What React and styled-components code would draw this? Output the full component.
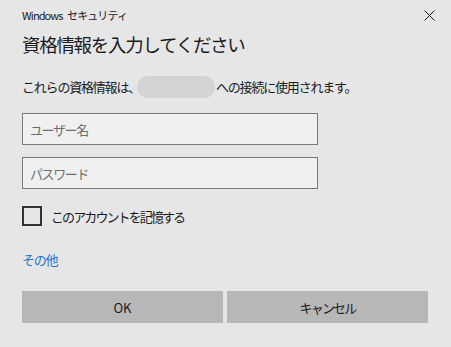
import React, { useState } from "react";
import styled, { createGlobalStyle } from "styled-components";

const GlobalStyle = createGlobalStyle`
  html, body {
    margin: 0;
    padding: 0;
    background: #e6e6e6;
  }
  body {
    font-family: "Noto Sans CJK JP", "Noto Sans", sans-serif;
    color: #1a1a1a;
  }
`;

const Dialog = styled.div`
  width: 451px;
  height: 347px;
  box-sizing: border-box;
  background: #e6e6e6;
  padding: 0 23px 0 22px;
  display: flex;
  flex-direction: column;
`;

const TitleBar = styled.div`
  display: flex;
  align-items: center;
  justify-content: space-between;
  height: 30px;
  font-size: 11px;
  letter-spacing: -0.9px;
  word-spacing: 3px;
  color: #1a1a1a;
`;

const CloseBtn = styled.button`
  background: none;
  border: none;
  padding: 0;
  margin-right: -8px;
  width: 14px;
  height: 14px;
  display: flex;
  align-items: center;
  justify-content: center;
  cursor: pointer;
`;

const Heading = styled.h1`
  margin: 0;
  font-size: 18.5px;
  font-weight: 400;
  line-height: 28px;
  letter-spacing: -1.3px;
  color: #1a1a1a;
`;

const Message = styled.p`
  margin: 18px 0 0;
  font-size: 13px;
  line-height: 22px;
  letter-spacing: -1.2px;
  display: flex;
  align-items: center;
`;

const Hidden = styled.span`
  display: inline-block;
  width: 78px;
  height: 22px;
  border-radius: 11px;
  background: #d2d3d5;
  margin: 0 1px 0 -3px;
`;

const Field = styled.input`
  width: 296px;
  height: 32px;
  box-sizing: border-box;
  margin-top: ${(p) => p.$top}px;
  border: 1px solid #7a7a7a;
  background: #f0f0f0;
  padding: 0 7px;
  font-family: inherit;
  font-size: 13px;
  letter-spacing: -1.4px;
  color: #1a1a1a;
  outline: none;
  &::placeholder {
    color: #6d6d6d;
  }
`;

const CheckRow = styled.label`
  display: flex;
  align-items: center;
  gap: 9px;
  margin-top: 17px;
  font-size: 13px;
  letter-spacing: -1.9px;
  cursor: pointer;
`;

const Box = styled.span`
  width: 20px;
  height: 20px;
  box-sizing: border-box;
  border: 2px solid #333;
  background: ${(p) => (p.$on ? "#333" : "transparent")};
`;

const Link = styled.a`
  margin-top: 25px;
  font-size: 13px;
  line-height: 18px;
  letter-spacing: -1.2px;
  color: #1a73d4;
  text-decoration: none;
  width: fit-content;
  cursor: pointer;
`;

const Buttons = styled.div`
  display: grid;
  grid-template-columns: 1fr 1fr;
  gap: 4px;
  margin-top: 22px;
`;

const Btn = styled.button`
  height: 32px;
  border: none;
  background: #b7b7b7;
  font-family: inherit;
  font-size: 13px;
  letter-spacing: ${(p) => (p.$tight ? "-1.8px" : "0")};
  color: #1a1a1a;
  cursor: pointer;
`;

export default function App() {
  const [remember, setRemember] = useState(false);
  return (
    <>
      <GlobalStyle />
      <Dialog>
        <TitleBar>
          <span>Windows セキュリティ</span>
          <CloseBtn aria-label="close">
            <svg width="11" height="11" viewBox="0 0 11 11">
              <path d="M0.5 0.5L10.5 10.5M10.5 0.5L0.5 10.5" stroke="#1a1a1a" strokeWidth="1" />
            </svg>
          </CloseBtn>
        </TitleBar>
        <Heading>資格情報を入力してください</Heading>
        <Message>
          これらの資格情報は、<Hidden />への接続に使用されます。
        </Message>
        <Field $top={15} placeholder="ユーザー名" />
        <Field $top={12} type="password" placeholder="パスワード" />
        <CheckRow onClick={() => setRemember(!remember)}>
          <Box $on={remember} />
          このアカウントを記憶する
        </CheckRow>
        <Link>その他</Link>
        <Buttons>
          <Btn>OK</Btn>
          <Btn $tight>キャンセル</Btn>
        </Buttons>
      </Dialog>
    </>
  );
}
